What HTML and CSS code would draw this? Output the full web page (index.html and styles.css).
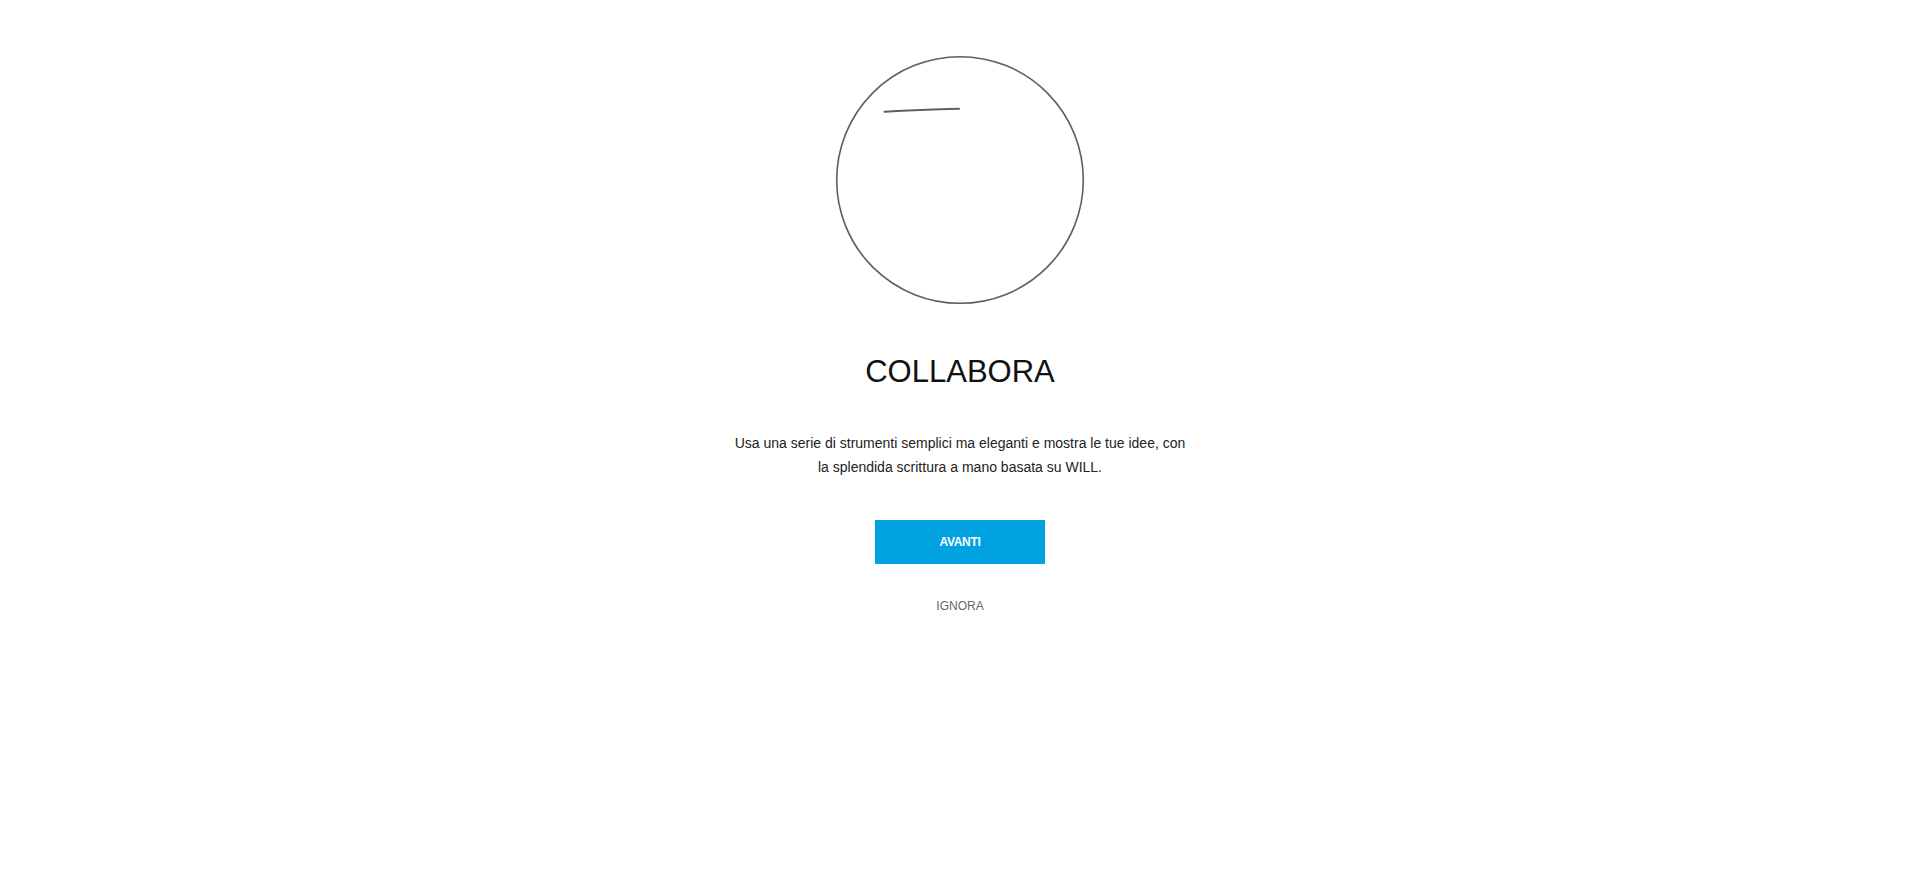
FILE: index.html
```html
<!DOCTYPE html>
<html lang="it">
<head>
<meta charset="utf-8">
<title>Collabora</title>
<link rel="stylesheet" href="styles.css">
</head>
<body>
<main class="onboard">
  <svg class="illus" width="250" height="250" viewBox="0 0 250 250">
    <circle cx="125" cy="125" r="123.3" fill="none" stroke="#5f5f5f" stroke-width="1.6"/>
    <path d="M49.5 56.8 Q85 54.6 124 53.8" fill="none" stroke="#5f5f5f" stroke-width="2" stroke-linecap="round"/>
  </svg>
  <h1 class="title">COLLABORA</h1>
  <p class="desc">Usa una serie di strumenti semplici ma eleganti e mostra le tue idee, con<br>la splendida scrittura a mano basata su WILL.</p>
  <button class="btn-next">AVANTI</button>
  <a class="skip" href="#">IGNORA</a>
</main>
</body>
</html>
```
FILE: styles.css
```css
html, body {
  margin: 0;
  padding: 0;
  background: #ffffff;
}
body {
  font-family: "Liberation Sans", Arial, Helvetica, sans-serif;
}
.onboard {
  display: flex;
  flex-direction: column;
  align-items: center;
  padding-top: 55px;
}
.illus {
  display: block;
}
.title {
  margin: 47px 0 0;
  font-size: 31px;
  line-height: 40px;
  font-weight: normal;
  color: #111111;
}
.desc {
  margin: 38.5px 0 0;
  font-size: 14px;
  line-height: 24.5px;
  color: #222222;
  text-align: center;
}
.btn-next {
  margin-top: 40px;
  width: 170px;
  height: 44px;
  border: none;
  background: #00a3e0;
  color: #ffffff;
  font-family: "Liberation Sans", Arial, Helvetica, sans-serif;
  font-size: 12px;
  font-weight: bold;
  letter-spacing: -0.3px;
  padding: 0;
  cursor: pointer;
}
.skip {
  margin-top: 34px;
  font-size: 12px;
  line-height: 16px;
  color: #666666;
  text-decoration: none;
}
```
